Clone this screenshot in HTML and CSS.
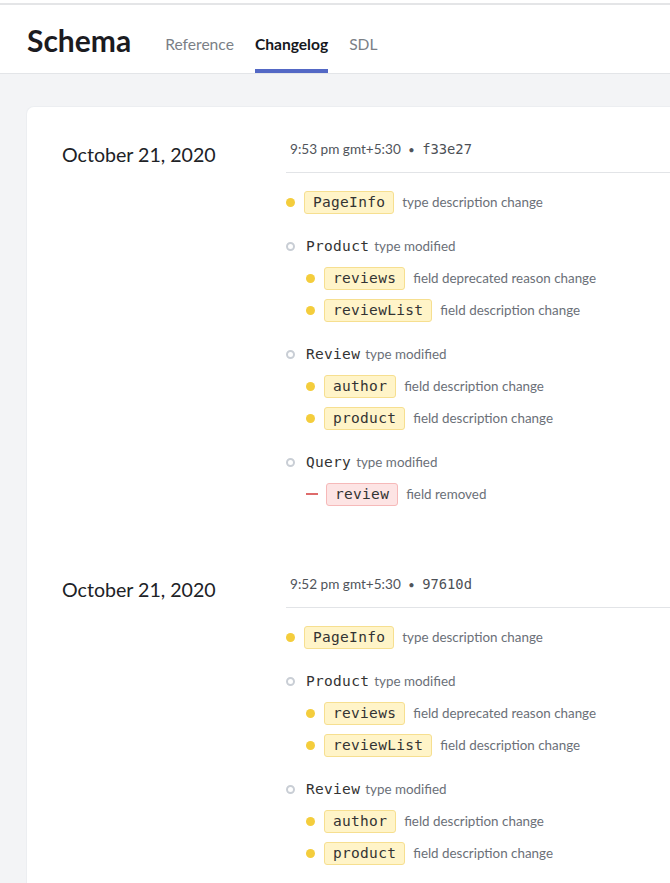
FILE: index.html
```html
<!DOCTYPE html>
<html>
<head>
<meta charset="utf-8">
<link rel="stylesheet" href="styles.css">
</head>
<body>
<div class="topline"></div>
<header class="header">
  <h1 class="title">Schema</h1>
  <nav class="tabs">
    <span class="tab">Reference</span>
    <span class="tab active">Changelog</span>
    <span class="tab">SDL</span>
  </nav>
</header>
<main class="main">
  <div class="card">
    <section class="entry">
      <div class="date">October 21, 2020</div>
      <div class="changes">
        <div class="stamp">9:53 pm gmt+5:30 <span class="sep">•</span> <span class="hash">f33e27</span></div>
        <div class="groups">
          <div class="group">
            <div class="row"><span class="dot"></span><span class="pill">PageInfo</span><span class="desc">type description change</span></div>
          </div>
          <div class="group">
            <div class="row"><span class="ring"></span><span class="type">Product</span><span class="desc tight">type modified</span></div>
            <div class="row nested"><span class="dot"></span><span class="pill">reviews</span><span class="desc">field deprecated reason change</span></div>
            <div class="row nested"><span class="dot"></span><span class="pill">reviewList</span><span class="desc">field description change</span></div>
          </div>
          <div class="group">
            <div class="row"><span class="ring"></span><span class="type">Review</span><span class="desc tight">type modified</span></div>
            <div class="row nested"><span class="dot"></span><span class="pill">author</span><span class="desc">field description change</span></div>
            <div class="row nested"><span class="dot"></span><span class="pill">product</span><span class="desc">field description change</span></div>
          </div>
          <div class="group">
            <div class="row"><span class="ring"></span><span class="type">Query</span><span class="desc tight">type modified</span></div>
            <div class="row nested"><span class="dash"></span><span class="pill removed">review</span><span class="desc">field removed</span></div>
          </div>
        </div>
      </div>
    </section>
    <section class="entry">
      <div class="date">October 21, 2020</div>
      <div class="changes">
        <div class="stamp">9:52 pm gmt+5:30 <span class="sep">•</span> <span class="hash">97610d</span></div>
        <div class="groups">
          <div class="group">
            <div class="row"><span class="dot"></span><span class="pill">PageInfo</span><span class="desc">type description change</span></div>
          </div>
          <div class="group">
            <div class="row"><span class="ring"></span><span class="type">Product</span><span class="desc tight">type modified</span></div>
            <div class="row nested"><span class="dot"></span><span class="pill">reviews</span><span class="desc">field deprecated reason change</span></div>
            <div class="row nested"><span class="dot"></span><span class="pill">reviewList</span><span class="desc">field description change</span></div>
          </div>
          <div class="group">
            <div class="row"><span class="ring"></span><span class="type">Review</span><span class="desc tight">type modified</span></div>
            <div class="row nested"><span class="dot"></span><span class="pill">author</span><span class="desc">field description change</span></div>
            <div class="row nested"><span class="dot"></span><span class="pill">product</span><span class="desc">field description change</span></div>
          </div>
        </div>
      </div>
    </section>
  </div>
</main>
</body>
</html>
```
FILE: styles.css
```css
* { box-sizing: border-box; }
html, body { margin: 0; padding: 0; }
body {
  font-family: Lato, "Noto Sans", sans-serif;
  background: #f3f4f6;
  color: #222;
  overflow: hidden;
  height: 883px;
}
.topline {
  height: 5px;
  background: #fff;
  border-bottom: 2px solid #e4e5e7;
}
.header {
  background: #fff;
  height: 69px;
  border-bottom: 1px solid #e3e5e8;
  display: flex;
  align-items: stretch;
  padding-left: 27px;
}
.title {
  margin: 0 34px 0 0;
  font-size: 30px;
  font-weight: 700;
  color: #1b1b1f;
  align-self: center;
  padding-top: 2px;
}
.tabs {
  display: flex;
  gap: 21px;
}
.tab {
  font-size: 15.6px;
  color: #7b7f86;
  display: flex;
  align-items: center;
  padding-top: 14px;
  border-bottom: 4px solid transparent;
}
.tab.active {
  color: #16181d;
  font-weight: 700;
  border-bottom-color: #5368c5;
  border-radius: 3px 3px 0 0;
}
.main {
  padding: 32px 0 0 26px;
}
.card {
  background: #fff;
  border-radius: 8px 0 0 8px;
  border: 1px solid #eceef1;
  border-right: 0;
  padding: 32px 0 40px 35px;
  min-height: 900px;
}
.entry {
  display: flex;
  margin-bottom: 64px;
}
.date {
  width: 224px;
  flex: none;
  font-size: 19.6px;
  line-height: 28px;
  margin-top: 2px;
  color: #202226;
}
.changes {
  flex: 1;
}
.stamp {
  font-size: 13.6px;
  line-height: 20px;
  color: #50545a;
  padding: 0 0 12px 4px;
  border-bottom: 1px solid #e2e4e7;
}
.sep { margin: 0 4px; font-size: 11px; }
.hash {
  font-family: "DejaVu Sans Mono", monospace;
  font-size: 13.8px;
  color: #4c5056;
}
.groups {
  padding-top: 13px;
}
.group + .group { margin-top: 12px; }
.row {
  display: flex;
  align-items: center;
  height: 32px;
}
.row.nested { padding-left: 20px; }
.dot {
  width: 9px;
  height: 9px;
  border-radius: 50%;
  background: #f4cd3c;
  margin-right: 9px;
  flex: none;
}
.ring {
  width: 9px;
  height: 9px;
  border-radius: 50%;
  border: 2px solid #c9ced5;
  margin-right: 11px;
  flex: none;
}
.dash {
  width: 12px;
  height: 2px;
  background: #de6b6b;
  margin-right: 8px;
  flex: none;
}
.pill {
  font-family: "DejaVu Sans Mono", monospace;
  font-size: 14.5px;
  line-height: 21px;
  padding: 0 8px;
  background: #fff4c8;
  border: 1px solid #f6df90;
  border-radius: 3px;
  color: #333;
  letter-spacing: 0.3px;
}
.pill.removed {
  background: #fde4e4;
  border-color: #f6b9b9;
}
.type {
  font-family: "DejaVu Sans Mono", monospace;
  font-size: 14.5px;
  color: #333;
  letter-spacing: 0.3px;
}
.desc {
  font-size: 13.4px;
  color: #6b7078;
  margin-left: 8px;
}
.desc.tight { margin-left: 5px; }
```
